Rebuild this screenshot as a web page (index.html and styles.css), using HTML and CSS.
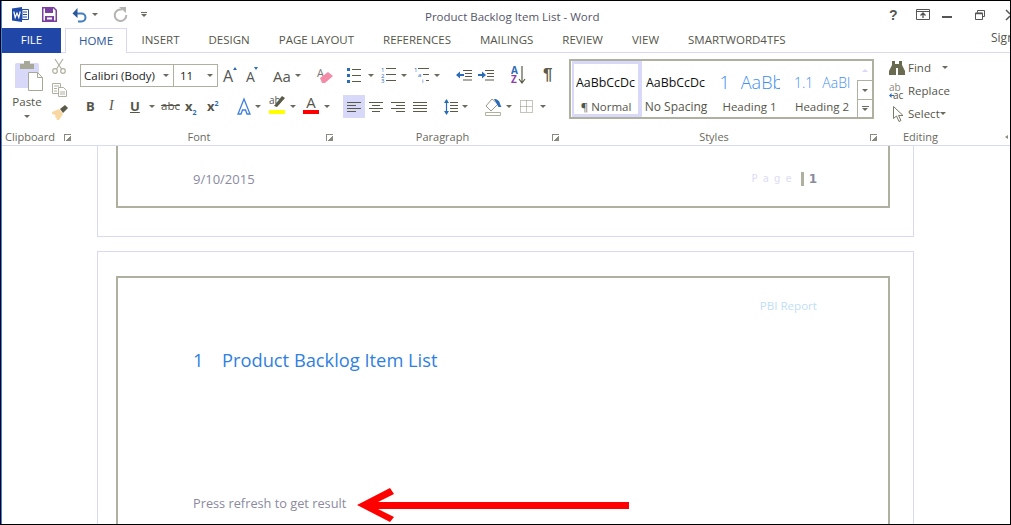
FILE: index.html
```html
<!DOCTYPE html>
<html lang="en">
<head>
<meta charset="utf-8">
<title>Product Backlog Item List - Word</title>
<link rel="stylesheet" href="styles.css">
</head>
<body>
<div class="window">
  <header class="titlebar">
    <div class="qat">
      <svg class="ic-word" width="17" height="15" viewBox="0 0 17 15"><path d="M0 1.500 10 0v15L0 13.500z" fill="#1f4aa8"/><path d="M10 2.500h6.500v10H10z" fill="#fff" stroke="#1f4aa8"/><path d="M11 5h4M11 7.500h4M11 10h4" stroke="#1f4aa8"/><path d="M1.800 4.500 3.200 10.500 5 6 6.800 10.500 8.200 4.500" fill="none" stroke="#fff" stroke-width="1.200"/></svg>
      <svg class="ic-save" width="15" height="15" viewBox="0 0 15 15"><path d="M.75.750h11l2.500 2.500v11H.75z" fill="none" stroke="#7b3fa0" stroke-width="1.500"/><path d="M3 .500h8V6H3z" fill="#7b3fa0"/><path d="M3 9h9v5.500H3z" fill="#7b3fa0"/><path d="M5 10.500h5v2H5z" fill="#fff"/></svg>
      <svg class="ic-undo" width="15" height="14" viewBox="0 0 15 14"><path d="M3 5.500h6.500a4 4 0 0 1 0 8H6" fill="none" stroke="#3f7fbf" stroke-width="2"/><path d="M5.500 0 .5 5.500 5.500 10z" fill="#2b579a"/></svg>
      <span class="caret"></span>
      <svg class="ic-redo" width="15" height="15" viewBox="0 0 15 15"><path d="M9 2.600a5.800 5.800 0 1 0 4.300 5.400" fill="none" stroke="#b4b4b0" stroke-width="2"/><path d="M6 0h7v6z" fill="#b4b4b0"/></svg>
      <span class="more"><i></i><span class="caret"></span></span>
    </div>
    <div class="title">Product Backlog Item List - Word</div>
    <div class="winctl">
      <span class="help">?</span>
      <svg width="14" height="11" viewBox="0 0 14 11"><path d="M.5.500h13v10H.5z" fill="none" stroke="#555"/><path d="M.5 2.500h13" stroke="#555"/><path d="M7 9V4.500M4.500 6.500 7 4l2.500 2.500" fill="none" stroke="#555" stroke-width="1.300"/></svg>
      <span class="min"></span>
      <svg width="10" height="10" viewBox="0 0 10 10"><path d="M2.500 2.500V.5h7v6H7.500" fill="none" stroke="#555"/><path d="M.5 3h7v6.500h-7z" fill="#fff" stroke="#555"/><path d="M.5 3.500h7" stroke="#555" stroke-width="1.500"/></svg>
      <svg class="close" width="4" height="10" viewBox="0 0 4 10"><path d="M0 0 4 4M0 10l4-4" stroke="#555" stroke-width="1.500"/></svg>
    </div>
  </header>

  <nav class="tabs">
    <div class="tab file">FILE</div>
    <div class="tab home">HOME</div>
    <div class="tab">INSERT</div>
    <div class="tab">DESIGN</div>
    <div class="tab">PAGE LAYOUT</div>
    <div class="tab">REFERENCES</div>
    <div class="tab">MAILINGS</div>
    <div class="tab">REVIEW</div>
    <div class="tab">VIEW</div>
    <div class="tab">SMARTWORD4TFS</div>
    <div class="sign">Sign</div>
  </nav>

  <section class="ribbon">
    <div class="group g-clip">
      <div class="g-body clip-body">
        <div class="paste">
          <svg width="28" height="30" viewBox="0 0 28 30"><path d="M0 4a2 2 0 0 1 2-2h20a2 2 0 0 1 2 2v23H0z" fill="#d8d8f8"/><path d="M5 3h4V0h6v3h4v5H5z" fill="#a8a898"/><path d="M13.500 11.500h9l5 5v13h-14z" fill="#fff" stroke="#a8a898"/><path d="M22.500 11.500v5h5" fill="none" stroke="#a8a898"/></svg>
          <span class="paste-l">Paste</span>
          <span class="caret"></span>
        </div>
        <div class="clip-tools">
          <svg width="14" height="15" viewBox="0 0 14 15"><g fill="none" stroke="#b0b0a0" stroke-width="1.200"><path d="M3 0 9.500 10M11 0 4.500 10"/><circle cx="3" cy="12" r="2.300"/><circle cx="11" cy="12" r="2.300"/></g></svg>
          <svg width="15" height="14" viewBox="0 0 15 14"><g fill="#fff" stroke="#b0b0a0"><path d="M.5.500h8v10h-8z"/><path d="M6.500 4.500h5l3 3v6h-8z"/><path d="M2 3h5M2 5.500h3M2 8h3M8 9h5M8 11h5" fill="none"/></g></svg>
          <svg class="brush" width="16" height="15" viewBox="0 0 16 15"><path d="M0 7 7 4l4 5-4 6H5L4 12l-1 1 .5-3L0 9z" fill="#f8d8a0"/><path d="M8 4 13 0l3 3-5 5z" fill="#5a5a48"/></svg>
        </div>
      </div>
      <div class="g-label"><span>Clipboard</span><span class="launch"></span></div>
    </div>

    <div class="group g-font">
      <div class="g-body">
        <div class="row font-r1">
          <div class="combo"><span class="combo-t">Calibri (Body)</span><span class="caret"></span></div>
          <div class="combo size"><span class="combo-t">11</span><span class="caret"></span></div>
          <span class="grow">A<i class="up"></i></span>
          <span class="shrink">A<i class="down"></i></span>
          <span class="case">Aa<span class="caret"></span></span>
          <svg width="17" height="18" viewBox="0 0 17 18"><text x="1" y="10" class="svg-a">A</text><path d="M4 11 12 5l5 4-8 7H6z" fill="#f48ca8"/></svg>
        </div>
        <div class="row font-r2">
          <b class="f">B</b>
          <i class="f it">I</i>
          <span class="f u">U</span><span class="caret"></span>
          <span class="f st">abc</span>
          <span class="f x">x<sub>2</sub></span>
          <span class="f x">x<sup>2</sup></span>
          <svg width="14" height="17" viewBox="0 0 14 17"><path d="M7 1 1 16h3l1.500-4h3L10 16h3z" fill="#fff" stroke="#3f7fdf" stroke-width="1.300"/></svg><span class="caret"></span>
          <svg class="top" width="16" height="19" viewBox="0 0 16 19"><text x="0" y="9" class="svg-ab">ab</text><path d="M5 11 13 1l3 2-8 9z" fill="#5a5a48"/><path d="M0 15h16v4H0z" fill="#ffff00"/></svg><span class="caret"></span>
          <span class="fc">A</span><span class="caret"></span>
        </div>
      </div>
      <div class="g-label center"><span>Font</span><span class="launch"></span></div>
    </div>

    <div class="group g-para">
      <div class="g-body">
        <div class="row para-r1">
          <svg width="14" height="15" viewBox="0 0 14 15"><path d="M0 0h3v3H0zM0 6h3v3H0zM0 12h3v3H0z" fill="#2b6cb8"/><path d="M5 1.500h9M5 7.500h9M5 13.500h9" stroke="#5a5a48"/></svg><span class="caret"></span>
          <svg width="15" height="16" viewBox="0 0 15 16"><text x="0" y="5" class="svg-n">1</text><text x="0" y="11" class="svg-n">2</text><text x="0" y="16" class="svg-n">3</text><path d="M5 1.500h10M5 7.500h10M5 13.500h10" stroke="#5a5a48"/></svg><span class="caret"></span>
          <svg width="15" height="16" viewBox="0 0 15 16"><text x="0" y="5" class="svg-n">1</text><text x="4" y="10" class="svg-n">a</text><text x="8" y="16" class="svg-n">i</text><path d="M4 1.500h11M9 7.500h6M12 13.500h3" stroke="#5a5a48"/></svg><span class="caret"></span>
          <svg width="16" height="11" viewBox="0 0 16 11"><path d="M7 .5h9M9 3.500h7M9 6.500h7M7 10h9" stroke="#5a5a48"/><path d="M0 5 4 1.500v2.500h4v2H4v2.500z" fill="#2b6cb8"/></svg>
          <svg width="16" height="11" viewBox="0 0 16 11"><path d="M7 .5h9M9 3.500h7M9 6.500h7M7 10h9" stroke="#5a5a48"/><path d="M8 5 4 1.500v2.500H0v2h4v2.500z" fill="#2b6cb8"/></svg>
          <svg width="15" height="18" viewBox="0 0 15 18"><text x="0" y="8" class="svg-az a">A</text><text x="0" y="17" class="svg-az z">Z</text><path d="M11 0v16M8 13l3 4 3-4" fill="none" stroke="#5a5a48" stroke-width="1.200"/></svg>
          <span class="pil">¶</span>
        </div>
        <div class="row para-r2">
          <span class="align on"><svg width="14" height="10" viewBox="0 0 14 10"><path d="M0 .5h14M0 3.500h9M0 6.500h14M0 9.500h9" stroke="#5a5a48"/></svg></span>
          <span class="align"><svg width="14" height="10" viewBox="0 0 14 10"><path d="M0 .5h14M3 3.500h8M0 6.500h14M3 9.500h8" stroke="#5a5a48"/></svg></span>
          <span class="align"><svg width="14" height="10" viewBox="0 0 14 10"><path d="M0 .5h14M5 3.500h9M0 6.500h14M5 9.500h9" stroke="#5a5a48"/></svg></span>
          <span class="align"><svg width="14" height="10" viewBox="0 0 14 10"><path d="M0 .5h14M0 3.500h14M0 6.500h14M0 9.500h14" stroke="#5a5a48"/></svg></span>
          <svg width="14" height="16" viewBox="0 0 14 16"><path d="M2.500 1v14" stroke="#2b6cb8" stroke-width="1.200"/><path d="M0 4l2.500-4L5 4zM0 12l2.500 4L5 12z" fill="#2b6cb8"/><path d="M6 3.500h8M6 6.500h8M6 9.500h8M6 12.500h8" stroke="#5a5a48"/></svg><span class="caret"></span>
          <svg width="17" height="18" viewBox="0 0 17 18"><path d="M7 1 1 8l5 5 7-7z" fill="#fff" stroke="#9a9a88"/><path d="M9 1c3 0 6 2 6 5l1.500 3-3 0z" fill="#2b6cb8"/><path d="M.5 14.500h15v3H.5z" fill="#fff" stroke="#b0b0a0"/></svg><span class="caret"></span>
          <svg width="13" height="13" viewBox="0 0 13 13"><path d="M.5.500h12v12H.5zM6.500.5v12M.5 6.500h12" fill="none" stroke="#8a8a78" stroke-dasharray="1 1"/></svg><span class="caret"></span>
        </div>
      </div>
      <div class="g-label center"><span>Paragraph</span><span class="launch"></span></div>
    </div>

    <div class="group g-styles">
      <div class="g-body">
        <div class="gallery">
          <div class="style active"><span class="s-prev">AaBbCcDc</span><span class="s-name">¶ Normal</span></div>
          <div class="style"><span class="s-prev">AaBbCcDc</span><span class="s-name wide">No Spacing</span></div>
          <div class="style s3"><span class="s-prev h1"><span>1</span><span>AaBb</span></span><span class="s-name">Heading 1</span></div>
          <div class="style s4"><span class="s-prev h2"><span>1.1</span><span>AaBl</span></span><span class="s-name">Heading 2</span></div>
          <div class="scroll">
            <span class="sb up"><i></i></span>
            <span class="sb dn"><i></i></span>
            <span class="sb mo"><b></b><i></i></span>
          </div>
        </div>
      </div>
      <div class="g-label center"><span>Styles</span><span class="launch"></span></div>
    </div>

    <div class="group g-edit">
      <div class="g-body edit-body">
        <div class="edit-row">
          <svg width="16" height="14" viewBox="0 0 16 14"><path d="M3 0h3v3h4V0h3v4l3 6v4H9V7H7v7H0v-4l3-6z" fill="#6a6a50"/></svg>
          <span>Find</span><span class="caret"></span>
        </div>
        <div class="edit-row">
          <span class="rep"><span class="rep-a">ab</span><span class="rep-c">ac</span><svg class="rep-arrow" width="5" height="5" viewBox="0 0 5 5"><path d="M0 2.500 2.500 0v2h2.500v1H2.500v2z" fill="#2b6cb8"/></svg></span>
          <span>Replace</span>
        </div>
        <div class="edit-row sel">
          <svg width="11" height="16" viewBox="0 0 11 16"><path d="M.5.500v12l3-2.500 2.500 5.500 2-1-2.500-5h4.500z" fill="#fff" stroke="#7a7a68"/></svg>
          <span>Select</span><span class="caret"></span>
        </div>
      </div>
      <div class="g-label center"><span>Editing</span></div>
    </div>
    <span class="collapse"></span>
  </section>

  <main class="doc">
    <div class="page page-prev">
      <div class="frame frame-prev">
        <div class="footer">
          <span class="date">9/10/2015</span>
          <span class="pageno"><span class="pg">P a g e</span><span class="bar"></span><b>1</b></span>
        </div>
      </div>
    </div>
    <div class="page page-cur">
      <div class="frame frame-cur">
        <div class="pbi">PBI Report</div>
        <h1 class="h"><span class="num">1</span>Product Backlog Item List</h1>
        <p class="press">Press refresh to get result</p>
      </div>
    </div>
    <svg class="arrow" width="273" height="35" viewBox="0 0 273 35"><path d="M0 17 33 0l4 6-16 8h251v7H21l16 8-4 5z" fill="#ff0000"/></svg>
  </main>
</div>
</body>
</html>
```

FILE: styles.css
```css
* { box-sizing: border-box; }
html, body { margin: 0; padding: 0; background: #fff; }
body { width: 1011px; height: 525px; overflow: hidden; font-family: "Open Sans", "Noto Sans", sans-serif; color: #55554a; }
svg { overflow: visible; flex: none; }

.window { width: 1011px; height: 525px; border: 1px solid #000; padding-left: 1px; display: flex; flex-direction: column; overflow: hidden; position: relative; background: #3a84e8; }

.caret { display: inline-block; width: 0; height: 0; border-left: 3px solid transparent; border-right: 3px solid transparent; border-top: 3px solid #6a6a60; flex: none; }

/* title bar */
.titlebar { height: 27px; flex: none; display: flex; align-items: center; position: relative; background: #fff; }
.qat { display: flex; align-items: center; padding-left: 10px; }
.ic-save { margin-left: 13px; }
.ic-undo { margin-left: 15px; }
.qat > .caret { margin-left: 5px; }
.ic-redo { margin-left: 15px; }
.more { margin-left: 13px; display: flex; flex-direction: column; align-items: center; gap: 1px; }
.more i { display: block; width: 6px; height: 1px; background: #6a6a60; }
.title { position: absolute; left: 423px; top: 7px; font-size: 11.500px; line-height: 17px; color: #55556a; white-space: nowrap; }
.winctl { margin-left: auto; display: flex; align-items: center; }
.help { font-weight: 700; font-size: 14px; width: 10px; color: #555; margin-right: 17px; font-family: "Liberation Sans", sans-serif; }
.min { width: 10px; height: 2px; background: #555; margin: 5px 23px 0 12px; }
.close { margin-left: 21px; }

/* tabs */
.tabs { height: 25px; flex: none; display: flex; border-bottom: 1px solid #d8d8f8; position: relative; background: #fff; }
.tab { font-size: 11.500px; line-height: 24px; height: 24px; padding: 0 14.500px; color: #55554a; white-space: nowrap; }
.tab.file { width: 59px; padding: 0; text-align: center; background: #2047a8; color: #fff; margin-right: 4px; height: 25px; }
.tab.home { width: 62px; padding: 0; text-align: center; color: #2b579a; background: #fff; border: 1px solid #d8d8f8; border-bottom: 0; height: 25px; }
.sign { position: absolute; left: 989px; top: 1px; font-size: 12px; color: #55554a; line-height: 17px; }

/* ribbon */
.ribbon { height: 93px; flex: none; display: flex; border-bottom: 1px solid #d8d8f8; position: relative; background: #fff; }
.group { display: flex; flex-direction: column; flex: none; position: relative; }
.g-body { height: 77px; flex: none; }
.g-label { font-size: 11px; line-height: 14px; height: 14px; color: #6a6a60; position: relative; white-space: nowrap; }
.g-label.center { text-align: center; }
.launch { position: absolute; right: 10px; top: 4px; width: 7px; height: 7px; border-left: 1px solid #8a8a80; border-top: 1px solid #8a8a80; background: linear-gradient(135deg, transparent 55%, #8a8a80 55%); }

.g-clip { width: 78px; padding-left: 3px; }
.g-clip .launch { right: 9px; }
.clip-body { display: flex; padding: 8px 0 0 10px; }
.paste { display: flex; flex-direction: column; align-items: center; width: 24px; }
.paste svg { align-self: flex-start; }
.paste-l { font-size: 11.500px; line-height: 16px; margin-top: 3px; color: #55554a; }
.paste .caret { margin-top: 5px; }
.clip-tools { display: flex; flex-direction: column; gap: 9px; margin: -2px 0 0 13px; }
.brush { margin-top: -1px; }

.row { display: grid; align-items: center; justify-items: start; }

.g-font { width: 263px; }
.g-font .g-label { padding-right: 25px; }
.font-r1 { height: 23px; margin-top: 11px; grid-template-columns: 94px 49px 23px 27px 43px 17px; }
.combo { height: 23px; border: 1px solid #b0b0a0; width: 94px; display: flex; align-items: center; justify-content: space-between; padding: 0 4px 0 3px; background: #fff; }
.combo.size { width: 44px; border-left: 0; }
.combo-t { font-size: 11.500px; color: #222; white-space: nowrap; }
.combo.size .combo-t { padding-left: 3px; }
.grow, .shrink { font-size: 16px; color: #555; position: relative; line-height: 20px; }
.shrink { font-size: 14px; margin-top: 3px; }
.grow i, .shrink i { position: absolute; top: 1px; left: 10px; width: 0; height: 0; border-left: 2.500px solid transparent; border-right: 2.500px solid transparent; }
.shrink i { top: 0; left: 8px; }
.grow i { border-bottom: 3px solid #2b6cb8; }
.down { border-top: 3px solid #2b6cb8; }
.case { font-size: 15px; color: #55554a; display: flex; align-items: center; gap: 4px; }
.svg-a { font-size: 11px; fill: #777; font-family: "Open Sans", sans-serif; }
.font-r2 { height: 22px; margin-top: 8px; padding-left: 6px; grid-template-columns: 23px 21px 19px 12px 24px 22px 30px 18px 14px 21px 13px 21px 6px; }
.f { font-size: 13px; color: #55554a; line-height: 16px; }
.it { font-family: "Liberation Serif", serif; font-size: 14px; }
.u { text-decoration: underline; font-weight: 700; }
.st { text-decoration: line-through; font-size: 11.500px; }
.x { font-weight: 700; font-size: 13px; }
.x sub, .x sup { font-size: 7px; color: #2b6cb8; line-height: 0; }
.top { align-self: start; }
.fc { align-self: start; font-size: 15px; line-height: 15px; color: #55554a; border-bottom: 4px solid #ff0000; width: 16px; text-align: center; height: 19px; }
.svg-ab { font-size: 10px; fill: #555; font-family: "Open Sans", sans-serif; }

.g-para { width: 226px; }
.g-para .g-label { padding-right: 27px; }
.para-r1 { height: 18px; margin-top: 13px; padding-left: 4px; grid-template-columns: 21px 13px 20px 13px 20px 22px 22px 33px 32px 20px; }
.svg-n { font-size: 6px; fill: #2b6cb8; font-family: "Open Sans", sans-serif; }
.svg-az { font-size: 10px; font-family: "Open Sans", sans-serif; font-weight: 700; }
.svg-az.a { fill: #2b6cb8; }
.svg-az.z { fill: #8a3fa8; }
.pil { font-size: 17px; line-height: 18px; color: #5a5a48; font-family: "Liberation Sans", sans-serif; font-weight: 700; }
.para-r2 { height: 23px; margin-top: 11px; grid-template-columns: 22px 22px 22px 35px 18px 23px 21px 14px 20px 6px; }
.align { width: 22px; height: 23px; display: flex; align-items: center; justify-content: center; }
.align.on { background: #d8d8f8; }

.g-styles { width: 305px; }
.g-styles .g-label { padding-right: 15px; }
.g-styles .launch { right: -3px; }
.gallery { margin-top: 6px; height: 60px; width: 305px; border: 2px solid #b0b0a0; display: flex; background: #fff; position: relative; padding-left: 1px; }
.style { width: 70px; height: 56px; display: flex; flex-direction: column; align-items: center; overflow: hidden; border: 3px solid transparent; border-left-width: 2px; border-right-width: 4px; }
.style.active { border-color: #d8d8f8; }
.style.s3 { width: 71px; margin-left: 3px; }
.style.s4 { width: 71px; padding-left: 3px; }
.s-prev { height: 34px; line-height: 31px; width: 60px; overflow: hidden; font-size: 12.400px; color: #111; white-space: nowrap; padding-top: 3px; flex: none; }
.s-prev.h1 { display: flex; gap: 11px; color: #3f8fef; font-size: 18px; font-weight: 300; }
.s-prev.h2 { display: flex; gap: 9px; color: #3f8fef; font-size: 14px; font-weight: 300; padding-left: 2px; }
.s-name { font-size: 11.500px; line-height: 18px; color: #55554a; white-space: nowrap; flex: none; }
.s-name.wide { font-size: 12px; }
.scroll { margin-left: auto; width: 15px; height: 56px; display: flex; flex-direction: column; }
.sb { display: flex; flex-direction: column; align-items: center; justify-content: center; width: 15px; height: 19px; border-left: 1px solid #b0b0a0; border-top: 1px solid #b0b0a0; }
.sb.up { border: 0; height: 19px; }
.sb.mo { height: 18px; }
.sb i { display: block; width: 0; height: 0; border-left: 3px solid transparent; border-right: 3px solid transparent; border-top: 3px solid #6a6a60; }
.sb.up i { border-top: 0; border-bottom: 3px solid #d8d8f8; }
.sb b { display: block; width: 7px; height: 1px; background: #6a6a60; margin-bottom: 1px; }

.g-edit { width: 127px; padding-left: 15px; }
.edit-body { display: flex; flex-direction: column; padding-top: 3px; }
.edit-row { height: 23px; display: flex; align-items: center; gap: 3px; font-size: 11.500px; color: #55554a; white-space: nowrap; }
.edit-row .caret { margin-left: 8px; }
.edit-row.sel { padding-left: 4px; gap: 4px; }
.edit-row.sel .caret { margin-left: -4px; }
.rep { width: 16px; position: relative; display: flex; flex-direction: column; line-height: 8px; font-size: 10px; }
.rep-a { color: #8a8a80; }
.rep-c { color: #55554a; padding-left: 4px; }
.rep-arrow { position: absolute; left: 0; bottom: 1px; }
.g-edit .g-label { width: 63px; }
.collapse { position: absolute; right: 2px; bottom: 6px; width: 0; height: 0; border-top: 2px solid transparent; border-bottom: 2px solid transparent; border-right: 3px solid #8a8a80; }

/* document */
.doc { flex: 1; position: relative; overflow: hidden; background: #fff; }
.page { width: 817px; margin-left: 95px; border: 1px solid #d8d8f8; background: #fff; }
.page-prev { height: 91px; border-top: 0; }
.page-cur { height: 300px; margin-top: 14px; padding: 24px 0 0 18px; }
.frame { width: 774px; border: 2px solid #b0b0a0; }
.frame-prev { margin-left: 18px; height: 62px; border-top: 0; position: relative; }
.footer { display: flex; align-items: center; justify-content: space-between; padding: 25px 71px 0 75px; }
.date { font-size: 13px; line-height: 16px; color: #8a8aa0; }
.pageno { display: flex; align-items: center; font-size: 12px; line-height: 16px; }
.pg { color: #dcdcf4; letter-spacing: 1px; font-family: "DejaVu Sans", sans-serif; font-size: 10px; }
.bar { width: 3px; height: 14px; background: #b0b0a0; margin: 0 5px 0 8px; }
.pageno b { color: #8a8aa0; font-family: "DejaVu Sans", sans-serif; }
.frame-cur { height: 280px; padding: 21px 71px 0 75px; border-bottom: 0; }
.pbi { text-align: right; font-size: 11.600px; line-height: 14px; color: #bfe0f8; }
.h { margin: 35px 0 0; font-weight: 400; font-size: 18.300px; line-height: 24px; color: #2f7fdf; white-space: nowrap; }
.num { display: inline-block; width: 29px; }
.press { margin: 123px 0 0; font-size: 12.750px; line-height: 16px; color: #8a8aa0; white-space: nowrap; }
.arrow { position: absolute; left: 355px; top: 342px; }
```
